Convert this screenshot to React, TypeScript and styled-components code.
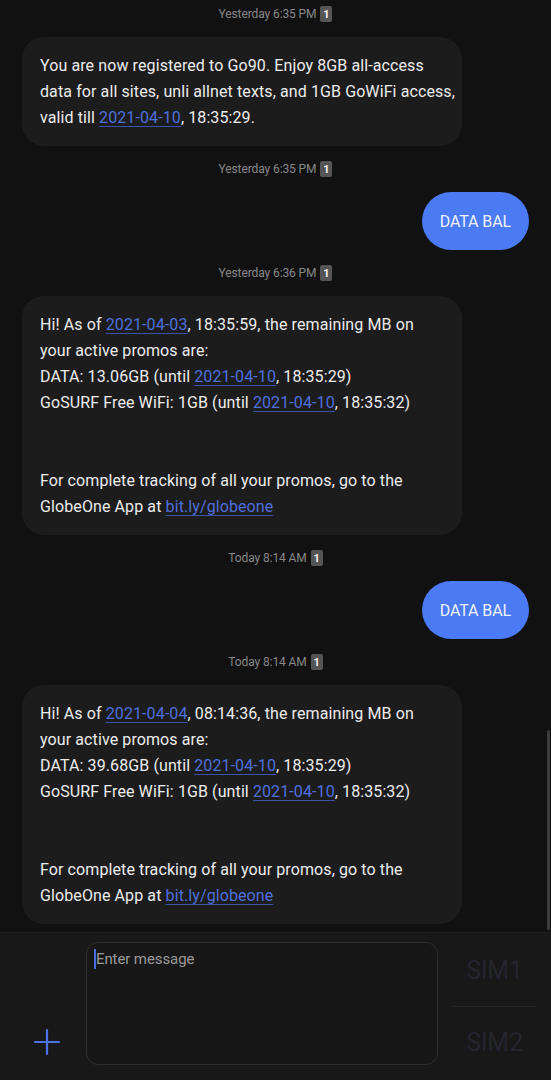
import React from 'react';
import styled, { createGlobalStyle } from 'styled-components';

const GlobalStyle = createGlobalStyle`
  html, body {
    margin: 0;
    padding: 0;
    background: #111111;
  }
  body {
    font-family: Roboto, 'Noto Sans', 'Liberation Sans', sans-serif;
    -webkit-font-smoothing: antialiased;
  }
`;

const Screen = styled.div`
  position: relative;
  width: 551px;
  height: 1080px;
  display: flex;
  flex-direction: column;
  background: #111111;
  overflow: hidden;
`;

const Thread = styled.div`
  flex: 1;
  min-height: 0;
  overflow: hidden;
  display: flex;
  flex-direction: column;
  padding: 6px 22px 0 22px;
`;

const Stamp = styled.div`
  display: flex;
  justify-content: center;
  align-items: center;
  gap: 4px;
  height: 16px;
  margin: 0 0 15px;
  color: #878787;
  font-size: 12px;
  letter-spacing: -0.1px;
`;

const Badge = styled.span`
  display: inline-flex;
  align-items: center;
  justify-content: center;
  width: 12px;
  height: 16px;
  border-radius: 2px;
  background: #555555;
  color: #f2f2f2;
  font-size: 11px;
  font-weight: 700;
`;

const Incoming = styled.div`
  align-self: flex-start;
  flex-shrink: 0;
  width: 440px;
  box-sizing: border-box;
  padding: 16px 18px 15px;
  margin-bottom: 15px;
  background: #1c1c1c;
  border-radius: 22px;
  color: #ececec;
  font-size: 16px;
  line-height: 26px;
  letter-spacing: 0.1px;
`;

const Line = styled.div`
  white-space: nowrap;
  height: 26px;
`;

const Link = styled.span`
  color: #4f6fdc;
  text-decoration: underline;
  text-decoration-color: #3a52a8;
  text-underline-offset: 3px;
`;

const Outgoing = styled.div`
  align-self: flex-end;
  flex-shrink: 0;
  display: flex;
  align-items: center;
  justify-content: center;
  height: 58px;
  padding: 0 18px;
  margin-bottom: 15px;
  background: #4a7af4;
  border-radius: 29px;
  color: #eef2ff;
  font-size: 16px;
  letter-spacing: -0.1px;
`;

const Composer = styled.div`
  flex-shrink: 0;
  height: 148px;
  display: flex;
  align-items: stretch;
  background: #181818;
  border-top: 1px solid #1f1f1f;
  box-sizing: border-box;
  padding: 9px 0 15px;
`;

const AttachSlot = styled.div`
  width: 86px;
  display: flex;
  align-items: flex-end;
  justify-content: center;
  padding-left: 8px;
  padding-bottom: 9px;
  box-sizing: border-box;
`;

const InputBox = styled.div`
  width: 352px;
  box-sizing: border-box;
  border: 1px solid #2f2f2f;
  border-radius: 12px;
  background: #171717;
  padding: 6px 7px;
`;

const Placeholder = styled.div`
  display: flex;
  align-items: center;
  height: 20px;
  color: #9a9a9a;
  font-size: 15px;
  letter-spacing: -0.1px;
`;

const Caret = styled.span`
  display: inline-block;
  width: 2px;
  height: 20px;
  background: #4a6fe0;
`;

const SimColumn = styled.div`
  flex: 1;
  display: flex;
  flex-direction: column;
  align-items: center;
  padding: 0 14px;
`;

const SimButton = styled.div<{ $offset?: number }>`
  flex-shrink: 0;
  height: 56px;
  margin-top: ${(p) => p.$offset ?? 0}px;
  display: flex;
  align-items: center;
  justify-content: center;
  width: 100%;
  color: #25252e;
  font-size: 25px;
  letter-spacing: -0.3px;
`;

const SimDivider = styled.div`
  flex-shrink: 0;
  width: 84px;
  height: 1px;
  margin-top: 8px;
  background: #262626;
`;

const ScrollThumb = styled.div`
  position: absolute;
  right: 1px;
  top: 730px;
  width: 3px;
  height: 200px;
  background: #3c3c3c;
  border-radius: 2px;
`;

const PlusIcon = () => (
  <svg width="28" height="28" viewBox="0 0 28 28">
    <path d="M14 2v24M2 14h24" stroke="#4c72e6" strokeWidth="2.2" strokeLinecap="round" />
  </svg>
);

const StampRow = ({ text }: { text: string }) => (
  <Stamp>
    {text}
    <Badge>1</Badge>
  </Stamp>
);

const BalanceReply = ({ asOf, time, data }: { asOf: string; time: string; data: string }) => (
  <Incoming>
    <Line>
      Hi! As of <Link>{asOf}</Link>, {time}, the remaining MB on
    </Line>
    <Line>your active promos are:</Line>
    <Line>
      DATA: {data} (until <Link>2021-04-10</Link>, 18:35:29)
    </Line>
    <Line>
      GoSURF Free WiFi: 1GB (until <Link>2021-04-10</Link>, 18:35:32)
    </Line>
    <Line />
    <Line />
    <Line>For complete tracking of all your promos, go to the</Line>
    <Line>
      GlobeOne App at <Link>bit.ly/globeone</Link>
    </Line>
  </Incoming>
);

export default function App() {
  return (
    <Screen>
      <GlobalStyle />
      <Thread>
        <StampRow text="Yesterday 6:35 PM" />
        <Incoming>
          <Line>You are now registered to Go90. Enjoy 8GB all-access</Line>
          <Line>data for all sites, unli allnet texts, and 1GB GoWiFi access,</Line>
          <Line>
            valid till <Link>2021-04-10</Link>, 18:35:29.
          </Line>
        </Incoming>
        <StampRow text="Yesterday 6:35 PM" />
        <Outgoing>DATA BAL</Outgoing>
        <StampRow text="Yesterday 6:36 PM" />
        <BalanceReply asOf="2021-04-03" time="18:35:59" data="13.06GB" />
        <StampRow text="Today 8:14 AM" />
        <Outgoing>DATA BAL</Outgoing>
        <StampRow text="Today 8:14 AM" />
        <BalanceReply asOf="2021-04-04" time="08:14:36" data="39.68GB" />
      </Thread>
      <Composer>
        <AttachSlot>
          <PlusIcon />
        </AttachSlot>
        <InputBox>
          <Placeholder>
            <Caret />
            Enter message
          </Placeholder>
        </InputBox>
        <SimColumn>
          <SimButton>SIM1</SimButton>
          <SimDivider />
          <SimButton $offset={7}>SIM2</SimButton>
        </SimColumn>
      </Composer>
      <ScrollThumb />
    </Screen>
  );
}
